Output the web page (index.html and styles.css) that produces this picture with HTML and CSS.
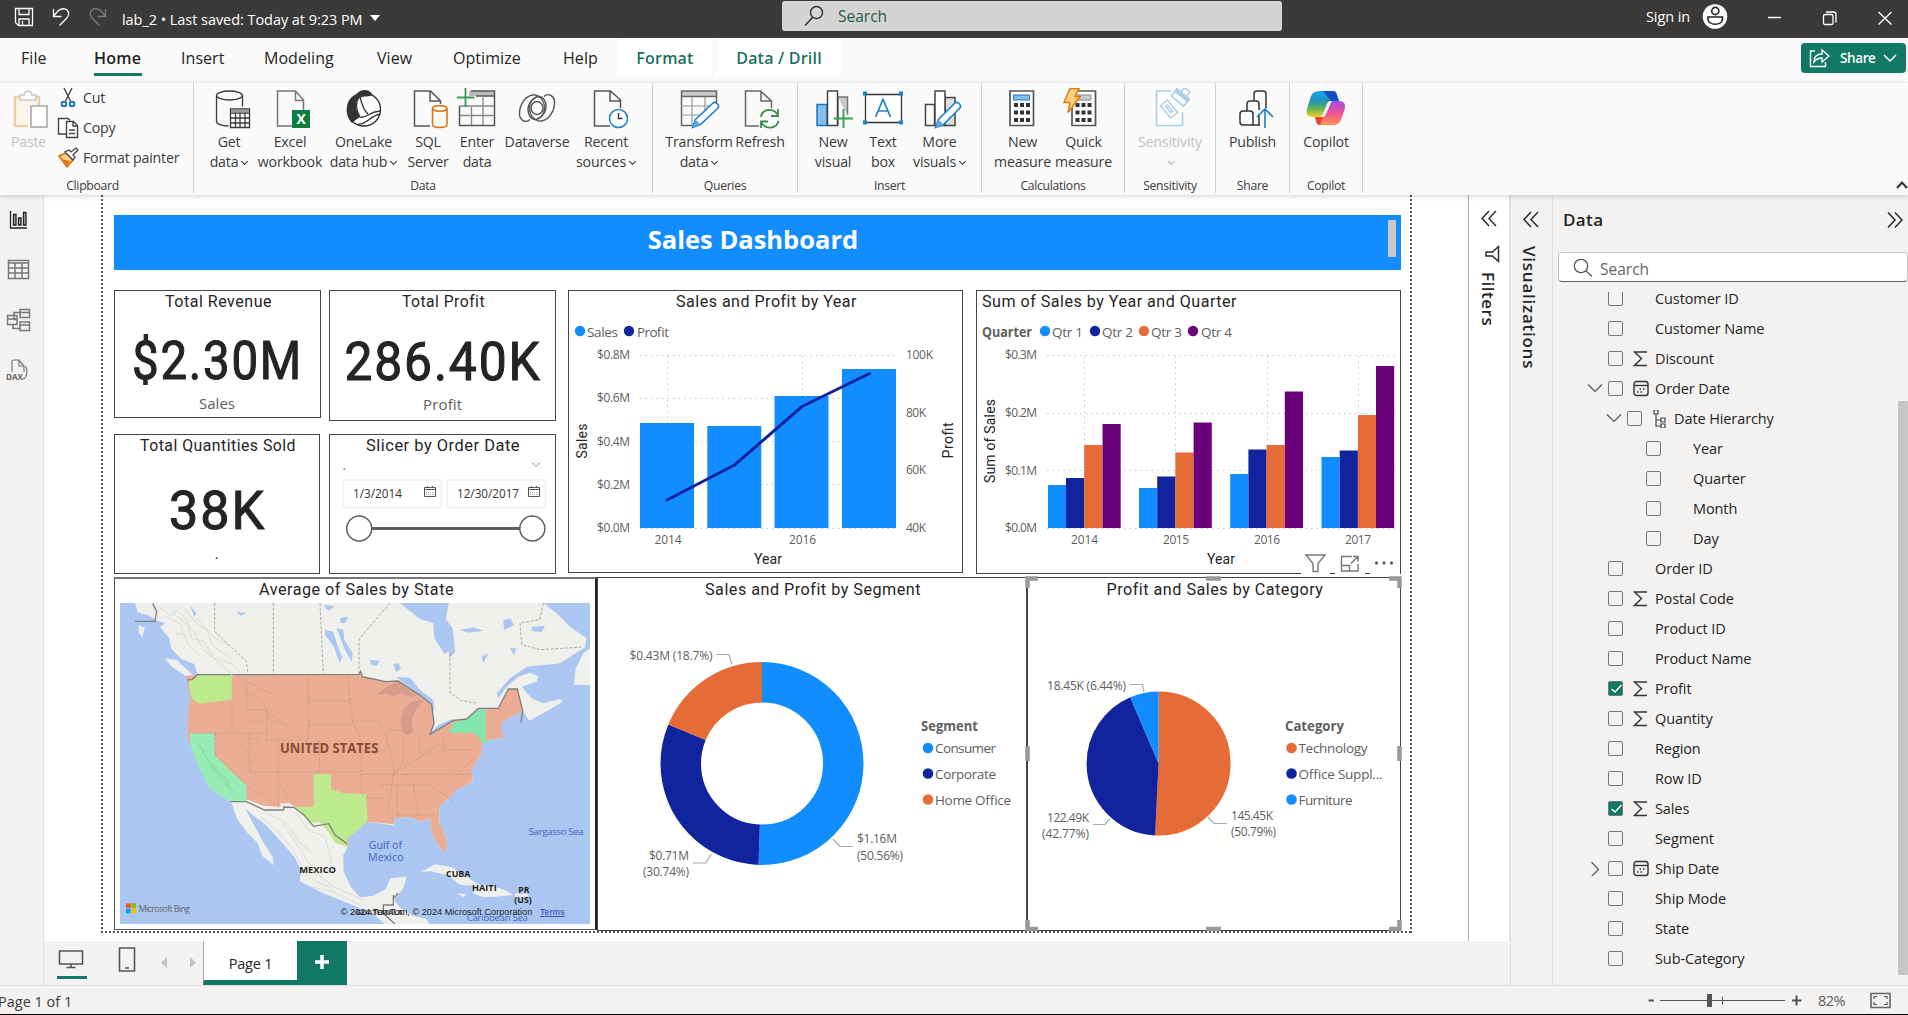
FILE: index.html
```html
<!DOCTYPE html>
<html lang="en">
<head>
<meta charset="utf-8">
<title>lab_2 - Power BI Desktop</title>
<link rel="stylesheet" href="styles.css">
</head>
<body>
<div class="app">
<header class="titlebar">
  <svg class="quick" viewBox="0 0 122 38"><g fill="none" stroke="#fff" stroke-width="1.3"><path d="M15.500 8.500h17v17h-14l-3-3zM19 8.500v6h10v-6M19 25v-6h10v6M22.500 25v-4"/><path d="M53.500 9v7.500h8M53.500 16l5-5.500c4-3 9-2 10 2 1 3-1 5-3 7l-6 6"/><path stroke="#7d7c7b" d="M105.500 9v7.500h-8M105.500 16l-5-5.500c-4-3-9-2-10 2-1 3 1 5 3 7l6 6"/></g></svg>
  <span class="doc">lab_2 • Last saved: Today at 9:23 PM</span><i class="down"></i>
  <div class="topsearch"><svg viewBox="0 0 20 22"><g fill="none" stroke="#333" stroke-width="1.500"><circle cx="12.500" cy="7.500" r="6"/><path d="M8.500 12.500L1 20.500"/></g></svg><span>Search</span></div>
  <span class="signin">Sign in</span>
  <svg class="winctl" viewBox="1700 0 208 38"><circle cx="1716" cy="16.500" r="12.300" fill="#fff"/><g fill="none" stroke="#222" stroke-width="1.600"><circle cx="1716.300" cy="11" r="3.600"/><path d="M1709 17h14.500v2c0 7-14.500 7-14.500 0z"/></g><g fill="none" stroke="#fff" stroke-width="1.300"><path d="M1769 17.500h13M1879.500 12l13 12.500M1892.500 12l-13 12.500"/><rect x="1824.500" y="14.500" width="9.500" height="10" rx="1.500"/><path d="M1827 12h7.500q2.500 0 2.500 2.500v8"/></g></svg>
</header>
<nav class="tabs">
  <span class="t1">File</span><span class="t2 active">Home</span><span class="t3">Insert</span><span class="t4">Modeling</span><span class="t5">View</span><span class="t6">Optimize</span><span class="t7">Help</span><span class="ctx t8">Format</span><span class="ctx t9">Data / Drill</span>
  <button class="share"><svg viewBox="1809 46 22 22"><path d="M1815 50h-4.500v15.500h15V61M1814 61c0-6 4-8 8-8v-4l7 6-7 6v-4c-4 0-6 1-8 4z" fill="none" stroke="#fff" stroke-width="1.400"/></svg><span>Share</span><svg class="shchev" viewBox="0 0 14 8"><path d="M1 1l6 6 6-6" fill="none" stroke="#fff" stroke-width="1.500"/></svg></button>
</nav>
<section class="ribbon">
  <div class="group clipboard"><div class="items">
    <div class="paste"><svg class="ic" viewBox="7 88 44 42"><g fill="#fff" stroke-width="2"><path d="M22 97h-7v29h13" fill="none" stroke="#ecd0a4" stroke-width="2.500"/><path d="M17 99h21v7H29v18H17z" fill="#fbf4e8"/><path d="M33 97h6v8" fill="none" stroke="#ecd0a4" stroke-width="2.500"/><path d="M20 100v-5h4c1-5 7-5 8 0h4v5z" stroke="#c8c8c8" stroke-width="1.500"/><path d="M31 106h16v21H31z" stroke="#b9b9b9"/></g></svg><span>Paste</span></div>
    <div class="clips">
      <div><svg viewBox="57 88 22 22"><g fill="none" stroke="#444" stroke-width="1.400"><path d="M64 89l7 14M72 89l-7 14"/><g stroke="#1b75bb" stroke-width="2"><circle cx="64" cy="105" r="2.300"/><circle cx="72" cy="105" r="2.300"/></g></g></svg><span class="c1">Cut</span></div>
      <div><svg viewBox="57 117 22 22"><g fill="#fff" stroke="#444" stroke-width="1.400"><path d="M66 134h-7.500v-15.500H68l2 2"/><path d="M66.500 121.500h7l4 4v12h-11zM73 122v4h4M69 130h6M69 133.500h6"/></g></svg><span class="c2">Copy</span></div>
      <div><svg viewBox="57 147 22 22"><path d="M59 156l7-3 7 7-6 7z" fill="#fbd08a" stroke="#d9700d" stroke-width="1.500"/><path d="M65 152l8 8 2-3-2-2 5-5-2-2-5 4-2-2z" fill="#fff" stroke="#444" stroke-width="1.300"/><path d="M61 159l9 2-3 5z" fill="#e07812"/></svg><span class="c3">Format painter</span></div>
    </div></div><h6>Clipboard</h6></div>

  <div class="group g-data"><div class="items">
    <div class="b w56"><svg class="ic" viewBox="206 88 44 42"><g fill="none" stroke="#3b3a39" stroke-width="1.300"><ellipse cx="228.500" cy="95.500" rx="13" ry="4.500"/><path d="M215.500 95.500v26c0 2.500 5 4.500 12 4.500M241.500 95.500v11"/><path fill="#fff" d="M229.500 109h19v18.500h-19z"/><path d="M229.500 113h19M229.500 118h19M229.500 123h19M234.500 113v14M239 113v14M244 113v14"/></g><path fill="#999" d="M230 109.500h18v3h-18z"/></svg><span>Get</span><span>data<i class="cv"></i></span></div>
    <div class="b w66"><svg class="ic" viewBox="267 88 44 42"><path d="M291 126h-14.500V91h18l8 9v10M294.500 91v9.500h8" fill="none" stroke="#777" stroke-width="1.500"/><path fill="#107c41" d="M291 110h18v18h-18z"/><text x="300" y="124" text-anchor="middle" class="xl">X</text></svg><span>Excel</span><span>workbook</span></div>
    <div class="b w82"><svg class="ic" viewBox="342 88 44 42"><circle cx="364" cy="109.500" r="16.500" fill="#fff" stroke="#333" stroke-width="1.400"/><path fill="#333" d="M356 95c3-6 13-7 16-1 1 3-7 2-10 3s-6 3-6 8 2 10 4 12c-3 2-6 4-8 6-4-4-6-10-5-16s4-11 9-12z"/><path d="M360 117c-4-7-5-14-1-20M360 117c6 2 8-5 20-6M358 124c8 1 12-8 22-10M360 97c2 8 4 14 8 17" fill="none" stroke="#333" stroke-width="1.300"/></svg><span>OneLake</span><span>data hub<i class="cv"></i></span></div>
    <div class="b w48"><svg class="ic" viewBox="406 88 44 42"><path d="M430 126h-15.500V91h16l10 10v3M430 91v10h10" fill="none" stroke="#555" stroke-width="1.500"/><path d="M432.500 108.500v16c0 4 14.500 4 14.500 0v-16" fill="#fffaf3" stroke="#d9700d" stroke-width="1.500"/><ellipse cx="439.750" cy="108.500" rx="7.250" ry="2.700" fill="#fff" stroke="#d9700d" stroke-width="1.500"/></svg><span>SQL</span><span>Server</span></div>
    <div class="b w50"><svg class="ic" viewBox="456 88 44 42"><path fill="#bbb" d="M470 91h25v5h-25z"/><g fill="none" stroke="#555" stroke-width="1.500"><path d="M472 91h23.500v34.500h-35V106M477 96h18"/><path stroke="#888" stroke-width="1.300" d="M461 106h34M461 115.500h34M472.500 107v18M484 96v29"/></g><path d="M466.500 88v19M458 97.500h17.500" stroke="#3a9955" stroke-width="1.800"/></svg><span>Enter</span><span>data</span></div>
    <div class="b w70"><svg class="ic" viewBox="516 88 44 42"><g fill="none" stroke="#555" stroke-width="1.400"><ellipse cx="538" cy="108" rx="6" ry="6.500"/><path d="M531 119.500c-4 4-10 1-10.500-5-.5-8 4.500-18 13-19.500 6-1 12 5 12 13 0 6-4 11-9 11.500-5 0-7.500-5-7.500-10 0-8 7-12 9-12.500"/><path d="M545 96.500c4-4 10-1 10.500 5 .5 8-4.500 18-13 19.500-6 1-12-5-12-13 0-6 4-11 9-11.500 5 0 7.500 5 7.500 10 0 8-7 12-9 12.500"/></g></svg><span>Dataverse</span></div>
    <div class="b w66r"><svg class="ic" viewBox="584 88 44 42"><path d="M610 126h-15.500V91h16l10 9v8M610 91v10h10" fill="none" stroke="#555" stroke-width="1.500"/><circle cx="618.500" cy="118.500" r="9" fill="#fff" stroke="#2482c5" stroke-width="1.500"/><path d="M618.500 113v5.500h4" fill="none" stroke="#333" stroke-width="1.400"/></svg><span>Recent</span><span>sources<i class="cv"></i></span></div>
  </div><h6>Data</h6></div>

  <div class="group g-q"><div class="items">
    <div class="b w68"><svg class="ic" viewBox="677 88 44 42"><path fill="#c8c8c8" d="M681 91h35v5h-35z"/><g fill="none" stroke="#666" stroke-width="1.500"><path d="M696 125.500h-14.500V91h35v12M681 96.500h35"/><path stroke="#999" stroke-width="1.200" d="M681 106h30M681 115h20M692 97v28M705 97v14"/></g><path d="M692.500 127.500l3-8 17-16c3-3 8 2 5 5l-17 16z" fill="#fff" stroke="#1b80c9" stroke-width="1.600"/><path fill="#60a9e0" d="M692.500 127.500l3-8 5 5z"/></svg><span>Transform</span><span>data<i class="cv"></i></span></div>
    <div class="b w52"><svg class="ic" viewBox="739 88 44 42"><path d="M760 126h-13.500V91h15l11 10v7M762 91v10h10" fill="none" stroke="#666" stroke-width="1.500"/><path d="M762 117c1-8 12-10 17-2M779 109v7h-7M779.500 121c-2 8-12 9-17 2M762 128v-6.500h7" fill="none" stroke="#3a8f4f" stroke-width="1.800"/></svg><span>Refresh</span></div>
  </div><h6>Queries</h6></div>

  <div class="group g-i"><div class="items">
    <div class="b w48"><svg class="ic" viewBox="811 88 44 42"><g stroke-width="1.500"><path d="M817 104.500h10v21h-10z" fill="#83beec" stroke="#1b75bb"/><path d="M838 97h9.500v18M838 97v28" fill="#c8c8c8" stroke="#777"/><path d="M827.500 91h10v34.500h-10z" fill="#fff" stroke="#444"/></g><path d="M843.500 109v19M834 118.500h19" stroke="#35a14d" stroke-width="1.900"/></svg><span>New</span><span>visual</span></div>
    <div class="b w52b"><svg class="ic" viewBox="861 88 44 42"><path d="M865.500 94.500h36v28h-36z" fill="#fff" stroke="#333" stroke-width="1.300"/><path d="M863 91.500h4v4h-4zM899 91.500h4v4h-4zM863 120.500h4v4h-4zM899 120.500h4v4h-4z" fill="#1b80c9"/><path d="M875.500 117l7.500-17.500 7.500 17.500M878 111h10" fill="none" stroke="#2482c5" stroke-width="1.700"/></svg><span>Text</span><span>box</span></div>
    <div class="b w60"><svg class="ic" viewBox="917 88 44 42"><g fill="#fff" stroke="#444" stroke-width="1.500"><path d="M924.500 104.500h9v21h-9z"/><path fill="#ddd" d="M944 97.500h10v28h-10z"/><path d="M934 91h10v34.500h-10z"/></g><path d="M934.500 127.500l3-8 16-16c3-3 8 2 5 5l-16 16z" fill="#fff" stroke="#1b80c9" stroke-width="1.600"/><path fill="#60a9e0" d="M934.500 127.500l3-8 5 5z"/></svg><span>More</span><span>visuals<i class="cv"></i></span></div>
  </div><h6>Insert</h6></div>

  <div class="group g-c"><div class="items">
    <div class="b w58"><svg class="ic" viewBox="1001 88 44 42"><path d="M1010 91h23.500v34.500H1010z" fill="#fff" stroke="#555" stroke-width="1.700"/><path d="M1013.500 95h16v5h-16z" fill="#83beec" stroke="#1b75bb"/><path d="M1014 105h16M1014 112.500h16M1014 120h16" stroke="#333" stroke-width="4" stroke-dasharray="4 2"/></svg><span>New</span><span>measure</span></div>
    <div class="b w58"><svg class="ic" viewBox="1061 88 44 42"><path d="M1071 91h23.500v34.500H1071z" fill="#fff" stroke="#555" stroke-width="1.700"/><path d="M1076 95h14v5h-14z" fill="#ccc" stroke="#888"/><path d="M1074.500 105h16M1074.500 112.500h16M1074.500 120h16" stroke="#333" stroke-width="4" stroke-dasharray="4 2"/><path d="M1069 88.500h9l-4 8h5l-12 16 2-10h-6z" fill="#ffd07a" stroke="#e07812" stroke-width="1.500"/></svg><span>Quick</span><span>measure</span></div>
  </div><h6>Calculations</h6></div>

  <div class="group g-s"><div class="items"><div class="b w80 off"><svg class="ic" viewBox="1148 88 44 42"><path d="M1171 91h-14.500v34.500h26V112" fill="#fff" stroke="#a9cfe9" stroke-width="1.600"/><g transform="translate(1180 98) rotate(40)" fill="#fff" stroke="#a9cfe9" stroke-width="1.600"><path d="M-3-11h7v6h-7zM-8-5H8v9H-8z"/><path fill="#a9cfe9" d="M-8-5H8v3H-8z"/></g><g transform="translate(1169 109) rotate(-40)" fill="#fff" stroke="#a9cfe9" stroke-width="1.500"><path d="M-4.500-8h9V8h-9zM-1-4v8h2.500v-8z"/></g></svg><span>Sensitivity</span><span><i class="cv"></i></span></div></div><h6>Sensitivity</h6></div>
  <div class="group g-p"><div class="items"><div class="b w66"><svg class="ic" viewBox="1231 88 44 42"><g fill="none" stroke="#333" stroke-width="1.500"><path d="M1266 108V94q0-3-3-3h-6q-3 0-3 3v7M1259 110v-6q0-3-3-3h-6q-3 0-3 3v7M1253 125v-11q0-3-3-3h-7q-3 0-3 3v8q0 3 3 3h17M1259 114v11"/></g><path d="M1265 128v-19M1257 117l8-8 8 8" fill="none" stroke="#1b80c9" stroke-width="1.600"/></svg><span>Publish</span></div></div><h6>Share</h6></div>
  <div class="group g-o"><div class="items"><div class="b w66"><svg class="ic" viewBox="1304 88 44 42"><defs><linearGradient id="ca" x1="0" y1="0" x2="0" y2="1"><stop offset="0" stop-color="#1aa5f0"/><stop offset=".4" stop-color="#2493b8"/><stop offset=".65" stop-color="#5bb45a"/><stop offset="1" stop-color="#f4cc1c"/></linearGradient><linearGradient id="cb" x1="0" y1="0" x2="0" y2="1"><stop offset="0" stop-color="#a34df0"/><stop offset=".5" stop-color="#ee4f91"/><stop offset="1" stop-color="#fd9852"/></linearGradient></defs><path d="M1320 91h13q3 0 4 4l2 6h-8q-3 0-4 3l-4 10q-1 3-5 3h-6q-7-1-5-8l4-13q2-5 9-5z" fill="url(#ca)"/><path d="M1323 91h10q3 0 4 4l2 6h-8z" fill="#174dc2"/><path d="M1333 101h7q6 1 5 7l-4 12q-2 5-8 5h-13q-3 0-4-4l-1-4h7q3 0 4-3l4-9q1-4 3-4z" fill="url(#cb)"/><path d="M1315 117h8l-3 8q-3 0-4-4z" fill="#e8472d"/></svg><span>Copilot</span></div></div><h6>Copilot</h6></div>
  <svg class="collapse" viewBox="0 0 12 8"><path d="M1 7l5-5.500L11 7" fill="none" stroke="#333" stroke-width="2"/></svg>
</section>

<main class="work">
  <aside class="rail"><svg viewBox="0 195 43 210"><g fill="none" stroke="#222" stroke-width="1.300"><path d="M10.500 211v17h16.500"/><path fill="#aaa" d="M13.500 214.500h2.500v10.500h-2.500zM18.500 218h2.500v7h-2.500zM23.500 212.500h2.500v12.500h-2.500z"/><g stroke="#777" stroke-width="1.500"><path d="M8.500 260.500h20v18h-20zM8.500 263h20M8.500 268h20M8.500 273h20M15 263v15M22 263v15"/><path d="M7.500 315.500h9.500v9h-9.500zM7.500 319h9.500M20 309.500h9.500v8H20zM20 312.500h9.500M20 322h9.500v8.500H20zM20 325h9.500M17 319.500h-3v-7h6M13 324.500v4h7"/><path stroke-width="1.200" d="M12 372v-10q0-2 2-2h5l5 6v6M19 360v6h5M25.500 366q2 3 1 8t-4 5"/></g></g><text x="6" y="379.500" textLength="17" lengthAdjust="spacingAndGlyphs" class="dax">DAX</text></svg></aside>
  <div class="center">
   <div class="canvaswrap">
    <div class="canvas">
     <div class="page">
      <div class="banner"><h1>Sales Dashboard</h1><i class="thumb"></i></div>
      <div class="row upper">
       <div class="cards">
        <svg class="vis" style="width:207px;height:128px" viewBox="114 290 207 128"><text class="din" x="165" y="307" textLength="107" lengthAdjust="spacingAndGlyphs">Total Revenue</text><text class="num" x="132" y="379" textLength="171" lengthAdjust="spacingAndGlyphs">$2.30M</text><text class="lab l16" x="199" y="409" textLength="36">Sales</text></svg>
        <svg class="vis" style="width:227px;height:131px" viewBox="329 290 227 131"><text class="din" x="402" y="307" textLength="83" lengthAdjust="spacingAndGlyphs">Total Profit</text><text class="num" x="344.500" y="380" textLength="197" lengthAdjust="spacingAndGlyphs">286.40K</text><text class="lab l16" x="423" y="410" textLength="39">Profit</text></svg>
        <svg class="vis" style="width:206px;height:140px" viewBox="114 434 206 140"><text class="din" x="140" y="451" textLength="156" lengthAdjust="spacingAndGlyphs">Total Quantities Sold</text><text class="num" x="169" y="529" textLength="97" lengthAdjust="spacingAndGlyphs">38K</text><text class="din" x="214.500" y="559">.</text></svg>
        <svg class="vis" style="width:227px;height:140px" viewBox="329 434 227 140"><text class="din" x="366" y="451" textLength="154" lengthAdjust="spacingAndGlyphs">Slicer by Order Date</text><text class="lab" x="342.500" y="470">.</text><path d="M532 462.500l4 4 4-4" fill="none" stroke="#888"/><g fill="none" stroke="#f0f0f0" stroke-width="1.500"><path d="M343.500 480h98v27.500h-98zM447.500 480h98v27.500h-98z"/></g><text class="date" x="353" y="498" textLength="49" lengthAdjust="spacingAndGlyphs">1/3/2014</text><text class="date" x="457" y="498" textLength="62" lengthAdjust="spacingAndGlyphs">12/30/2017</text><g fill="none" stroke="#555"><path d="M424.500 487.500h11v9h-11zM424.500 489.500h11M427.500 486v2M432.500 486v2M528.500 487.500h11v9h-11zM528.500 489.500h11M531.500 486v2M536.500 486v2"/><path stroke="#aaa" stroke-dasharray="1 1" d="M426 492.500h8M426 494.500h8M530 492.500h8M530 494.500h8"/></g><path d="M371 528.500h149" stroke="#605e5c" stroke-width="3"/><g fill="#fff" stroke="#605e5c" stroke-width="1.500"><circle cx="359.200" cy="528.500" r="12.500"/><circle cx="532.300" cy="528.500" r="12.500"/></g></svg>
       </div>
       <svg class="vis" style="width:395px;height:283px" viewBox="568 290 395 283"><text class="din" x="676" y="307" textLength="181" lengthAdjust="spacingAndGlyphs">Sales and Profit by Year</text><circle cx="580" cy="331" r="5.200" fill="#118dff"/><circle cx="629" cy="331" r="5.200" fill="#12239e"/><g class="lab l14"><text x="587" y="337" textLength="31">Sales</text><text x="637" y="337" textLength="32">Profit</text></g>
        <g class="grid"><path d="M640 355.500h256M640 398.500h256M640 441.500h256M640 484.500h256M640 528.500h256M667.500 356v170M802.500 356v170"/></g>
        <g fill="#118dff"><path d="M640 423h54v105h-54zM707.300 426h54v102h-54zM774.500 396h54v132h-54zM842 369h54v159h-54z"/></g><path d="M667 500l67.500-35L802 406.500l67.500-33" fill="none" stroke="#12239e" stroke-width="3" stroke-linecap="round" stroke-linejoin="round"/>
        <g class="lab l13"><text x="597" y="359" textLength="33">$0.8M</text><text x="597" y="402.300" textLength="33">$0.6M</text><text x="597" y="445.600" textLength="33">$0.4M</text><text x="597" y="489" textLength="33">$0.2M</text><text x="597" y="532" textLength="33">$0.0M</text><text x="906" y="359" textLength="27">100K</text><text x="906" y="417" textLength="20">80K</text><text x="906" y="474" textLength="20">60K</text><text x="906" y="532" textLength="20">40K</text><text x="654.500" y="544" textLength="27">2014</text><text x="789" y="544" textLength="27">2016</text></g>
        <g class="din d14"><text x="754" y="564" textLength="28">Year</text><text transform="translate(587 458.500) rotate(-90)" textLength="35">Sales</text><text transform="translate(953 458.500) rotate(-90)" textLength="36">Profit</text></g></svg>
       <div class="visbox"><svg class="vis" style="width:425px;height:284px" viewBox="976 290 425 284"><text class="din" x="982" y="307" textLength="255" lengthAdjust="spacingAndGlyphs">Sum of Sales by Year and Quarter</text><text class="lab l14 bold" x="982" y="337" textLength="50" lengthAdjust="spacingAndGlyphs">Quarter</text><circle cx="1045" cy="331" r="5.200" fill="#118dff"/><circle cx="1095" cy="331" r="5.200" fill="#12239e"/><circle cx="1144" cy="331" r="5.200" fill="#e66c37"/><circle cx="1193" cy="331" r="5.200" fill="#6b007b"/><g class="lab l14"><text x="1052" y="337" textLength="31">Qtr 1</text><text x="1102" y="337" textLength="31">Qtr 2</text><text x="1151" y="337" textLength="31">Qtr 3</text><text x="1201" y="337" textLength="31">Qtr 4</text></g>
        <g class="grid"><path d="M1047 355.500h348M1047 413.500h348M1047 470.500h348M1047 528.500h348M1084.500 356v170M1175.500 356v170M1267.500 356v170M1358.500 356v170"/></g>
        <path fill="#118dff" d="M1048 485h18.200v43H1048zM1139 488h18.200v40H1139zM1230.200 474h18.200v54h-18.200zM1321.500 457h18.200v71h-18.200z"/><path fill="#12239e" d="M1066 478h18.200v50H1066zM1157.200 476.500h18.200v51.500h-18.200zM1248.400 449.500h18.200v78.500h-18.200zM1339.700 450.500h18.200v77.500h-18.200z"/><path fill="#e66c37" d="M1084.200 445h18.200v83h-18.200zM1175.400 452.500h18.200v75.500h-18.200zM1266.600 445h18.200v83h-18.200zM1357.900 415h18.200v113h-18.200z"/><path fill="#6b007b" d="M1102.500 424h18.200v104h-18.200zM1193.600 422.500h18.200v105.500h-18.200zM1284.800 391.500h18.200v136.500h-18.200zM1376 366h18.200v162H1376z"/>
        <g class="lab l13"><text x="1005" y="359" textLength="32">$0.3M</text><text x="1005" y="417" textLength="32">$0.2M</text><text x="1005" y="474.600" textLength="32">$0.1M</text><text x="1005" y="532" textLength="32">$0.0M</text><text x="1071" y="544" textLength="27">2014</text><text x="1163" y="544" textLength="26">2015</text><text x="1254" y="544" textLength="26">2016</text><text x="1345" y="544" textLength="26">2017</text></g><g class="din d14"><text x="1207" y="564" textLength="28">Year</text><text transform="translate(995 483) rotate(-90)" textLength="84">Sum of Sales</text></g></svg>
        <svg class="hdr" viewBox="1301 550 101 26"><path fill="#fff" d="M1301 571h29v5h-29zM1335 571h30v5h-30zM1370 571h30v5h-30z"/><g fill="none" stroke="#777" stroke-width="1.400"><path d="M1306 555h19l-7 8.500v8h-5v-8z"/><path d="M1352 556.500h-10.500v14.500h16.500v-7M1341.500 565.500h8v5.500M1353 556.500h5v5M1358 556.500l-7 7"/></g><g fill="#666"><circle cx="1376.500" cy="563" r="1.700"/><circle cx="1384" cy="563" r="1.700"/><circle cx="1391.500" cy="563" r="1.700"/></g></svg></div>
      </div>
      <div class="row lower">
       <div class="mapvis"><svg class="maptitle" viewBox="120 579 470 24"><text class="din" x="259" y="595" textLength="195" lengthAdjust="spacingAndGlyphs">Average of Sales by State</text></svg>
       <svg class="map" viewBox="30 99 1410 963" preserveAspectRatio="none">
        <rect x="30" y="99" width="1410" height="963" fill="#abc6f1"/>
        <g fill="#efefeb"><path d="M75 99L83 127L118 137L143 152L165 160L150 172L178 205L183 235L213 267L253 282L263 315L233 330L244 385L238 488L240 520L262 580L300 655L362 693L382 748L412 788L442 818L457 858L492 886L487 858L459 816L437 774L405 714L427 734L467 764L512 814L554 862L574 904L569 934L640 970L720 1002L790 1032L830 1067H960L950 1048L905 1036L868 1010L852 990L880 955L890 920L842 924L826 958L790 977L750 982L722 950L701 905L700 855L714 830L712 805L770 755L850 766L856 745L900 742L935 755L960 745L965 790L1000 848L1010 835L1008 800L988 760V710L1040 660L1088 635L1085 600L1116 545V515L1185 500L1172 480L1178 455L1238 422L1258 452L1300 430L1358 395L1350 387L1300 400L1265 385L1235 350L1280 335L1284 318L1260 308L1225 320L1190 350L1165 385L1160 370L1200 325L1250 290L1350 280L1425 232L1430 205L1380 170L1340 130L1300 99Z"/><path d="M1392 345l5-50 23-45 20-15v110zM165 265l35 5 55 50-10 10-60-40zM85 165l20 8-8 30-10-15zM935 905l40-22 50 8 60 40 30 18-65-5-40-30-50-10zM1090 945l50 0 45 15 25 15-50 5-40 2-30-12zM1040 970l30 3-10 8zM1215 970l40 2-5 10h-35z"/></g>
        <g fill="#abc6f1"><path d="M870 99l60 48 40 12 3 45 30 48 14-10v24l18-20-6-70-22-28 10-49zM645 180l25 5 12 40 15 38-8 16-18-50-25-34zM680 175l20 5 3 30 25 40-3 25-20-35zM850 283l15-4 8 18-15 8zM780 270l30 2-10 15-18-3zM690 145l25-5-8 18-14 2zM640 105l35 3-20 15zM1050 180l40-8 30 10-45 6zM1180 150l20-5 12 20-30 15zM1265 170l40-3-10 20-30-4zM1200 235l20 0-8 20zM1115 260l20-10-15 30zM380 125l30 4-18 8zM240 105l20 28-8 6zM860 320l40 3 30 37 40 30 4 34-38-46-60-43zM965 485l20-20 42-18-5 22-50 24z"/></g>
        <path d="M262 315l485-2 5-9 5 16 70 15 38-2 65 43 35 27 7 57-12 33 70-42 40-4 35-32h60l30-58h27l16 65-60 33-6 25 13 20-69 15v30l-31 55 3 35-48 25-52 50v50l20 40 2 35-10 13-35-58-5-45-25 10-35-13-44 3-6 18-80-8-56 48v25l-35-10-30-45-20-20-25 5-35-38-30-20h-28v10l-50-3-60-22-45-5-62-38-35-70-25-65-2-40 8-90-13-60z" fill="#eaad94"/>
        <path d="M235 330l32-15h98v74l-97 12-23-16z" fill="#bdea8c"/><path d="M240 490h74v66l95 90 2 50-49-1-62-38-35-70-25-65z" fill="#97ecb5"/><path d="M611 613h52v45l40 12 65 3 5 75-5 12-56 45v25l-35-10-30-45-20-20-27 5-30-38-22-12h63z" fill="#bdea8c"/><path d="M1017 488l12-30 41-10 35-32h22v98l30-7-40 15-5-15-22-19z" fill="#84e5ac"/>
        <g fill="none" stroke="#9b7163" stroke-width="2" stroke-dasharray="8 5" opacity=".5"><path d="M366 400v90M245 490h225M470 415v95h125M410 340v80h60M315 490v65l95 90M419 490v115M595 318v192M595 393h130M595 465h130M419 605h335M505 512v205M628 510v93M713 318l15 135 25 60v160l15 12M725 453h80l20 30 30 130M755 613h330M835 480h45M880 495v80l-30 40-20 130M928 495v70M1000 500v40h90M770 685h50M815 645h145l70 50M862 645v95M910 645l12 80M862 735h115M850 612l80-50 60-40M755 543h80"/></g>
        <g fill="none" stroke="#aaa" stroke-width="3" stroke-dasharray="9 5"><path d="M314 99v85l95 90 5 38M490 99v213M630 99l10 213M840 99l-93 108v105M1020 250v118l35 24 50 8M1300 99l-10 50-60 10 5 65 55 15 130-8"/></g>
        <g fill="#a46b7a" opacity=".28"><path d="M797 376l32-25 38-15 53 40-18 5-30-12-22 10-20-8zM880 490l-8-35 8-38 23-22 38-6-22 28-14 32 4 35-14 12z"/></g>
        <g fill="none" stroke="#808080" stroke-width="4"><path d="M75 154h60l5-30-12-24M232 330l15-2 15-14 485-1 5-9 5 16 70 15 38-2 65 43 35 27 7 57-12 33 70-42 40-4 35-32h60l30-58h27l16 65-5 35M362 695h47l55 25h57v-9l30 1 30 22 30 35 45-8 20 35 35 25"/><path d="M850 975v30h-30v25l35 32M865 970l-15 15"/></g>
        <g fill="none" stroke="#dcdcd7" stroke-width="3"><path d="M150 115l30 20 20-15 30 30 15 55 35 8 30 50 60 20 20 25M195 190l30 5 10 30 30 30M260 145l50 55 60 35M190 130l60 50 30 60 50 40 40 40M170 140l40 20 15 40M220 110l40 50 30 20 20 50 60 40M450 740l50 40 50 60 40 80 75 35M560 730l35 50 50 20 20 80M520 760l90 140 60 50 90 40M470 730l60 30 40 60 40 30M600 950l70 15 80 40"/></g>
        <g fill="none" stroke="#cc967e" stroke-width="3" opacity=".45"><path d="M370 325l40 40 50 30 20 55 60 20M400 330l100 50M400 440l50 20 30-30 40 30M390 520l40 60M430 500l20 25M510 640l30 50M410 650l60 30M1100 560l-90 80"/></g>
        <path d="M265 520l35 60 60 60M300 590l70 75" fill="none" stroke="#80d49f" stroke-width="4" opacity=".7"/>
        <g class="mt"><text x="510" y="549" textLength="295" lengthAdjust="spacingAndGlyphs" fill="#8b4a36" font-size="42">UNITED STATES</text><g fill="#222" font-size="27"><text x="568" y="908" textLength="110" lengthAdjust="spacingAndGlyphs">MEXICO</text><text x="1008" y="920" textLength="73" lengthAdjust="spacingAndGlyphs">CUBA</text><text x="1086" y="962" textLength="74" lengthAdjust="spacingAndGlyphs">HAITI</text><text x="1225" y="969" textLength="33" lengthAdjust="spacingAndGlyphs">PR</text><text x="1213" y="998" textLength="52" lengthAdjust="spacingAndGlyphs">(US)</text></g></g>
        <g class="sea"><text x="776" y="837" textLength="100" font-size="32">Gulf of</text><text x="774" y="873" textLength="107" font-size="32">Mexico</text><text x="1256" y="795" textLength="165" font-size="29">Sargasso Sea</text><text x="1070" y="1053" textLength="184" font-size="28">Caribbean Sea</text></g>
        <path d="M48 1000h14v14H48z" fill="#f35325"/><path d="M64 1000h14v14H64z" fill="#81bc06"/><path d="M48 1016h14v14H48z" fill="#05a6f0"/><path d="M64 1016h14v14H64z" fill="#ffba08"/>
        <text class="bing" x="86" y="1026" textLength="154">Microsoft Bing</text>
        <g class="mt" fill="#555" font-size="22"><text x="738" y="1034" textLength="140" lengthAdjust="spacingAndGlyphs">GUATEMALA</text><text x="838" y="1076" textLength="152" lengthAdjust="spacingAndGlyphs">NICARAGUA</text></g>
        <g class="copy"><text x="692" y="1035" textLength="575" lengthAdjust="spacingAndGlyphs">© 2024 TomTom, © 2024 Microsoft Corporation</text><text class="terms" x="1290" y="1035" textLength="74">Terms</text></g>
       </svg></div>
       <svg class="vis seg" style="width:430px;height:354px" viewBox="597 577 430 354"><text class="din" x="705" y="595" textLength="216" lengthAdjust="spacingAndGlyphs">Sales and Profit by Segment</text>
        <g fill="none" stroke-width="40.500" transform="rotate(-90 762 763.500)"><circle cx="762" cy="763.500" r="81.250" pathLength="100" stroke="#118dff" stroke-dasharray="50.560 49.440"/><circle cx="762" cy="763.500" r="81.250" pathLength="100" stroke="#12239e" stroke-dasharray="30.740 69.260" stroke-dashoffset="-50.560"/><circle cx="762" cy="763.500" r="81.250" pathLength="100" stroke="#e66c37" stroke-dasharray="18.700 81.300" stroke-dashoffset="-81.300"/></g>
        <g class="lead"><path d="M716 654.500h13l3 10M833 839l7 7.500h13M693 863h13l5-9"/></g><g class="lab l13"><text x="629.500" y="660" textLength="83">$0.43M (18.7%)</text><text x="857" y="843" textLength="40">$1.16M</text><text x="857" y="860" textLength="46">(50.56%)</text><text x="649" y="860" textLength="40">$0.71M</text><text x="643" y="876" textLength="46">(30.74%)</text></g>
        <text class="lab l14 bold" x="921" y="731" textLength="57" lengthAdjust="spacingAndGlyphs">Segment</text><circle cx="928" cy="748" r="5.300" fill="#118dff"/><circle cx="928" cy="773.500" r="5.300" fill="#12239e"/><circle cx="928" cy="799.500" r="5.300" fill="#e66c37"/><g class="lab l14"><text x="935" y="753" textLength="61">Consumer</text><text x="935" y="779" textLength="61">Corporate</text><text x="935" y="805" textLength="76">Home Office</text></g></svg>
       <div class="visbox"><svg class="vis cat" style="width:374px;height:354px" viewBox="1027 577 374 354"><text class="din" x="1106.500" y="595" textLength="217" lengthAdjust="spacingAndGlyphs">Profit and Sales by Category</text>
        <g fill="none" stroke-width="72" transform="rotate(-90 1158.600 763.500)"><circle cx="1158.600" cy="763.500" r="36" pathLength="100" stroke="#e66c37" stroke-dasharray="50.790 49.210"/><circle cx="1158.600" cy="763.500" r="36" pathLength="100" stroke="#12239e" stroke-dasharray="42.770 57.230" stroke-dashoffset="-50.790"/><circle cx="1158.600" cy="763.500" r="36" pathLength="100" stroke="#118dff" stroke-dasharray="6.440 93.560" stroke-dashoffset="-93.560"/></g>
        <g class="lead"><path d="M1130 684.500h12.500l1.500 8M1208 817l6 6.500h13M1093 824.500h12l5-6"/></g><g class="lab l13"><text x="1047" y="690" textLength="79">18.45K (6.44%)</text><text x="1047" y="822" textLength="42">122.49K</text><text x="1042" y="838" textLength="47">(42.77%)</text><text x="1231" y="820" textLength="42">145.45K</text><text x="1231" y="836" textLength="45">(50.79%)</text></g>
        <text class="lab l14 bold" x="1285" y="731" textLength="59" lengthAdjust="spacingAndGlyphs">Category</text><circle cx="1291.500" cy="748" r="5.300" fill="#e66c37"/><circle cx="1291.500" cy="773.500" r="5.300" fill="#12239e"/><circle cx="1291.500" cy="799.500" r="5.300" fill="#118dff"/><g class="lab l14"><text x="1298.500" y="753" textLength="69">Technology</text><text x="1298.500" y="779" textLength="84">Office Suppl...</text><text x="1298.500" y="805" textLength="54">Furniture</text></g></svg>
        <svg class="handles" viewBox="1025 575 378 358"><g fill="none" stroke="#999" stroke-width="4.500"><path d="M1027.500 588v-9.500h10.500M1389 578.500h10.500V588M1027.500 920v9h10.500M1389 929h10.500v-9M1206 578.500h15M1206 929h15M1027.500 746v15M1399.500 746v15"/></g></svg></div>
      </div>
     </div>
    </div>
    <aside class="filters"><svg viewBox="1469 195 40 75"><path d="M1489 211l-7 7.500 7 7.500M1496 211l-7 7.500 7 7.500M1498.500 246.500v15l-6-5.500h-6.500v-4h6.500z" fill="none" stroke="#252423" stroke-width="1.400"/></svg><span class="vtext vf">Filters</span></aside>
   </div>
   <div class="pages"><svg viewBox="44 941 159 44"><g fill="none" stroke="#555" stroke-width="1.600"><path d="M59.500 951h23v13h-23zM71 964v3M66.500 967.500h9M119.500 948h15v23h-15zM125 968h4"/></g><path fill="#117865" d="M57 976h30v3H57z"/><path fill="#c3c3c3" d="M167 957v11l-6-5.500zM190 957v11l6-5.500z"/></svg><div class="pagetab">Page 1</div><div class="add"><svg viewBox="0 0 14 14"><path d="M7 0v14M0 7h14" stroke="#fff" stroke-width="3.500"/></svg></div></div>
  </div>
  <aside class="viz"><svg viewBox="1511 195 41 45"><path d="M1531 212l-7 7.500 7 7.500M1538 212l-7 7.500 7 7.500" fill="none" stroke="#252423" stroke-width="1.400"/></svg><span class="vtext vv">Visualizations</span></aside>
  <aside class="data">
   <div class="dhead"><h3>Data</h3><svg viewBox="0 0 17 16"><path d="M1 .5L8 8l-7 7.500M8 .5L15 8l-7 7.500" fill="none" stroke="#252423" stroke-width="1.400"/></svg></div>
   <div class="dsearch"><svg viewBox="0 0 20 20"><g fill="none" stroke="#555" stroke-width="1.300"><circle cx="8" cy="8" r="6.700"/><path d="M13 13l6 5.500"/></g></svg><span>Search</span></div>
   <div class="fields"><ul>
    <li><i class="x"></i><i class="cb"></i><i class="fi"></i><span>Customer ID</span></li>
    <li><i class="x"></i><i class="cb"></i><i class="fi"></i><span>Customer Name</span></li>
    <li><i class="x"></i><i class="cb"></i><svg class="fi"><use href="#sigma"/></svg><span>Discount</span></li>
    <li><svg class="x"><use href="#open"/></svg><i class="cb"></i><svg class="fi"><use href="#cal"/></svg><span>Order Date</span></li>
    <li class="l2"><svg class="x"><use href="#open"/></svg><i class="cb"></i><svg class="fi"><use href="#hier"/></svg><span>Date Hierarchy</span></li>
    <li class="l3"><i class="x"></i><i class="cb"></i><i class="fi"></i><span>Year</span></li>
    <li class="l3"><i class="x"></i><i class="cb"></i><i class="fi"></i><span>Quarter</span></li>
    <li class="l3"><i class="x"></i><i class="cb"></i><i class="fi"></i><span>Month</span></li>
    <li class="l3"><i class="x"></i><i class="cb"></i><i class="fi"></i><span>Day</span></li>
    <li><i class="x"></i><i class="cb"></i><i class="fi"></i><span>Order ID</span></li>
    <li><i class="x"></i><i class="cb"></i><svg class="fi"><use href="#sigma"/></svg><span>Postal Code</span></li>
    <li><i class="x"></i><i class="cb"></i><i class="fi"></i><span>Product ID</span></li>
    <li><i class="x"></i><i class="cb"></i><i class="fi"></i><span>Product Name</span></li>
    <li><i class="x"></i><svg class="cb on"><use href="#tick"/></svg><svg class="fi"><use href="#sigma"/></svg><span>Profit</span></li>
    <li><i class="x"></i><i class="cb"></i><svg class="fi"><use href="#sigma"/></svg><span>Quantity</span></li>
    <li><i class="x"></i><i class="cb"></i><i class="fi"></i><span>Region</span></li>
    <li><i class="x"></i><i class="cb"></i><i class="fi"></i><span>Row ID</span></li>
    <li><i class="x"></i><svg class="cb on"><use href="#tick"/></svg><svg class="fi"><use href="#sigma"/></svg><span>Sales</span></li>
    <li><i class="x"></i><i class="cb"></i><i class="fi"></i><span>Segment</span></li>
    <li><svg class="x"><use href="#shut"/></svg><i class="cb"></i><svg class="fi"><use href="#cal"/></svg><span>Ship Date</span></li>
    <li><i class="x"></i><i class="cb"></i><i class="fi"></i><span>Ship Mode</span></li>
    <li><i class="x"></i><i class="cb"></i><i class="fi"></i><span>State</span></li>
    <li><i class="x"></i><i class="cb"></i><i class="fi"></i><span>Sub-Category</span></li>
   </ul><i class="scroll"></i></div>
  </aside>
</main>
<footer class="status"><span class="pcount">Page 1 of 1</span><svg viewBox="1640 986 170 28"><g stroke="#555" fill="none"><path stroke-width="2" d="M1648.500 1000.500h5.500M1792 1000.500h9.500M1796.500 995.500v10"/><path d="M1660 1000.500h125M1722.500 996.500v8"/></g><path fill="#555" d="M1707 994h5v13h-5z"/></svg><span class="pct">82%</span><svg class="fit" viewBox="0 0 22 18"><path d="M1 1.500h19v14H1z" fill="none" stroke="#666" stroke-width="1.600"/><path d="M7 4.500H4V7M14 4.500h3V7M4 10v2.500h3M17 10v2.500h-3" fill="none" stroke="#555" stroke-width="1.200"/></svg></footer>
</div>
<svg class="defs"><defs>
 <g id="sigma" fill="none" stroke="#333" stroke-width="1.400"><path d="M14 2H1.500l7 6.500-7 7H14"/></g>
 <g id="cal" fill="none" stroke="#333" stroke-width="1.400"><rect x="1" y="1.500" width="14" height="14" rx="2.500"/><path d="M1 5.500h14"/><path stroke-dasharray="1.500 2" d="M6.500 9h6M4 12h6"/></g>
 <g id="hier" fill="none" stroke="#444" stroke-width="1.200"><path d="M2 0h4v4H2zM9 8h4v4H9zM9 14h4v4H9zM4 4v12h5M4 10h5"/></g>
 <g id="open"><path d="M1 2.500l7 7 7-7" fill="none" stroke="#555" stroke-width="1.200"/></g>
 <g id="shut"><path d="M4.500 0l7 7.500-7 7" fill="none" stroke="#555" stroke-width="1.200"/></g>
 <g id="tick"><path d="M2.500 7l3.500 3 6.500-7" fill="none" stroke="#fff" stroke-width="1.500"/></g>
</defs></svg>
</body>
</html>
```
FILE: styles.css
```css
*{box-sizing:border-box}
body{margin:0;background:#f3f2f1;font-family:"Open Sans","Noto Sans",sans-serif;color:#252423;overflow:hidden}
h1,h2,h3,h6,ul{margin:0;padding:0;font-weight:400;list-style:none}
svg{display:block;flex:none}
.defs{position:absolute;width:0;height:0}
.app{width:1908px;height:1015px;display:flex;flex-direction:column;border-bottom:1px solid #000}
.titlebar{height:38px;flex:none;background:#3b3a39;color:#fff;display:flex;font-size:15px;line-height:37px}
.quick{width:122px;height:38px}
.doc{width:240px;white-space:nowrap;letter-spacing:-.05px;font-size:14.500px;line-height:39px}
.down{width:0;height:0;border:5.500px solid transparent;border-top:6px solid #fff;border-bottom:0;margin:15px 0 0 8px}
.topsearch{margin:1px 0 0 402px;width:500px;height:30px;background:#d4d4d2;border-radius:3px;display:flex;padding-left:22px;line-height:31px;font-size:15.500px;color:#1e5c4c}
.topsearch svg{width:20px;height:22px;margin:4px 14px 0 0}
.signin{margin-left:364px;width:53px;line-height:33px;font-size:14.500px;letter-spacing:-.1px;white-space:nowrap}
.winctl{width:208px;height:38px}
.tabs{height:45px;flex:none;background:#fafafa;display:flex;font-size:16px;line-height:40px;white-space:nowrap}
.tabs span{height:38px}
.t1{margin-left:21px;width:73px}.t2{width:48px;margin-right:39px}.t3{width:83px}.t4{width:113px}.t5{width:76px}.t6{width:110px}.t7{width:55px}
.tabs>span{letter-spacing:.05px}
.tabs .active{font-weight:600;border-bottom:3px solid #117865;letter-spacing:.2px}
.tabs .ctx{background:#fff;color:#19705f;font-weight:600;text-align:center;letter-spacing:.2px}
.t8{width:94px;margin-right:5px}.t9{width:124px}
.share{margin:5px 0 0 960px;width:105px;height:30px;border:0;border-radius:4px;background:#117865;color:#fff;font:600 13.500px "Open Sans";display:flex;align-items:center;padding:0 0 0 8px;letter-spacing:-.4px}
.share>svg:first-child{width:22px;height:22px;margin-right:9px}
.share>span{width:43px;height:30px;line-height:30px;text-align:left}.shchev{width:14px;height:8px}
.ribbon{height:112px;flex:none;background:#fafafa;display:flex;box-shadow:0 1px 5px rgba(0,0,0,.2);z-index:2;position:relative;color:#3b3a39;font-size:14.200px;letter-spacing:-.2px}
.group{height:110px;border-right:1px solid #d2d0ce;display:flex;flex-direction:column;flex:none}
.items{display:flex;height:95px;flex:none;justify-content:center}
.group h6{font-size:12.200px;line-height:16px;text-align:center;letter-spacing:-.3px}
.clipboard{width:194px}.g-data{width:459px}.g-q{width:145px}.g-i{width:184px}.g-c{width:143px}.g-s{width:91px}.g-p{width:74px}.g-o{width:73px}
.clipboard .items{justify-content:flex-start}.clipboard h6{padding-right:8px}
.g-data .items{justify-content:flex-start;padding-left:7px}
.g-q .items{padding-left:2px}
.b,.paste{display:flex;flex-direction:column;align-items:center;flex:none;padding-top:5px;line-height:20px;white-space:nowrap}
.ic{width:44px;height:42px;margin-bottom:2px}
.w56{width:56px}.w66{width:66px}.w82{width:81px}.w48{width:48px}.w50{width:50px}.w70{width:70px}.w66r{width:68px}.w68{width:68px}.w52{width:54px}.w52b{width:52px}.w60{width:61px}.w58{width:61px}.w80{width:80px}
.off{color:#c2c0be}
.cv{display:inline-block;width:5px;height:5px;border:solid #333;border-width:0 1.500px 1.500px 0;transform:rotate(45deg);margin:0 1px 3px 4px}
.off .cv{border-color:#aaa}
.paste{color:#c2c0be;width:53px;margin-left:2px}
.clips{display:flex;flex-direction:column;line-height:30px}
.clips div{display:flex;height:30px;align-items:center;white-space:nowrap}
.clips svg{width:22px;height:22px;margin:0 4px 0 2px}
.collapse{width:12px;height:8px;margin:98px 0 0 533px}
.work{height:790px;flex:none;display:flex}
.rail{width:44px;border-right:1px solid #e1dfdd}.rail svg{width:43px;height:210px}
.dax{font:700 9px "Open Sans";fill:#666}
.center{width:1466px;display:flex;flex-direction:column}
.canvaswrap{height:746px;display:flex;background:#fff}
.canvas{width:1424px;padding-left:57px}
.page{width:1311px;height:738px;padding:20px 0 0 13px;background:repeating-linear-gradient(180deg,#555 0 2px,transparent 2px 4px) 0 0/2px 100% no-repeat,repeating-linear-gradient(180deg,#555 0 2px,transparent 2px 4px) 100% 0/2px 100% no-repeat,repeating-linear-gradient(90deg,#555 0 2px,transparent 2px 4px) 0 100%/100% 2px no-repeat}
.banner{width:1287px;height:55px;background:#118dff;display:flex;padding-left:39px}
.banner h1{width:1200px;text-align:center;font-weight:700;font-size:25.500px;line-height:48px;color:#fff}
.thumb{width:8px;height:37px;background:#c8c8c8;margin:5px 0 0 35px}
.row{display:flex}
.upper{height:307px;padding-top:20px}
.cards{display:grid;grid-template-columns:215px 227px;grid-template-rows:144px 140px;width:454px;align-items:start}
.vis{outline:1px solid #444;outline-offset:-1px}
.visbox{position:relative;margin-left:13px}
.lower .visbox{margin-left:0}
.hdr{position:absolute;left:325px;top:260px;width:101px;height:26px}
.handles{position:absolute;left:-2px;top:-2px;width:378px;height:358px}
.mapvis{width:483px;height:353px;border:1px solid #555;border-right:2px solid #222;border-top:2px solid #777;padding:0 0 0 5px}
.maptitle{width:470px;height:24px}
.map{width:470px;height:321px}
.mt,.sea,.bing{font-family:"Open Sans"}.mt{font-weight:700}.sea{fill:#4665c0}
.bing{font-size:26px;fill:#666}
.copy{font:26px "Liberation Sans";fill:#222}.terms{fill:#1b3fb0;text-decoration:underline}
.din{font:16px Roboto;fill:#252423;letter-spacing:.5px}.d14{font-size:14px;letter-spacing:0}
.num{font:54px Roboto;fill:#252423;letter-spacing:2px;stroke:#252423;stroke-width:1.100px}
.lab{font-family:"Open Sans";fill:#605e5c;font-size:13px}.lab.l16{font-size:15px}.l14{font-size:13.500px}.l13{font-size:12px}.bold{font-weight:700}
.date{font:12px "Open Sans";fill:#333}
.grid{fill:none;stroke:#c8c6c4;stroke-dasharray:1.500 4}
.lead{fill:none;stroke:#aaa;stroke-width:1.200}
.xl{font:700 14px "Open Sans";fill:#fff}
.filters{width:42px;border-left:1px solid #b3b0ad;border-right:1px solid #e1dfdd}
.filters svg{width:40px;height:75px}
.vtext{display:block;writing-mode:vertical-rl;font-weight:600;white-space:nowrap;font-size:17px;line-height:20px}
.vf{margin:2px 0 0 9px;letter-spacing:.5px}.vv{margin:6px 0 0 8px;letter-spacing:.75px}
.viz{width:43px;border-right:1px solid #e1dfdd;border-left:1px solid #e1dfdd}.viz svg{width:41px;height:45px}
.pages{height:44px;display:flex}
.pages>svg{width:159px;height:44px}
.pagetab{width:94px;background:#fff;border-left:1px solid #aaa;border-bottom:5px solid #117865;text-align:center;line-height:46px;font-size:14.500px;letter-spacing:-.2px}
.add{width:50px;background:#117865;padding:14px 0 0 18px}.add svg{width:14px;height:14px}
.data{width:355px}
.dhead{height:57px;display:flex;justify-content:space-between;padding:0 4px 0 10px}
.dhead h3{font-size:17px;font-weight:600;line-height:50px;letter-spacing:.4px}
.dhead svg{width:17px;height:16px;margin-top:17px}
.dsearch{margin-left:5px;width:350px;height:30px;background:#fff;border:1px solid #c8c6c4;border-bottom:1px solid #605e5c;border-radius:4px;display:flex;padding-left:14px;color:#666;font-size:15.500px;line-height:32px}
.dsearch svg{width:20px;height:20px;margin:5px 7px 0 0}
.fields{margin-top:10px;height:690px;overflow:hidden;display:flex;justify-content:space-between}
.fields ul{margin-top:-8.500px}
.fields li{height:30px;display:flex;align-items:center;padding-left:34px;font-size:14.500px;letter-spacing:-.1px;white-space:nowrap}
.fields li.l2{padding-left:53px}.fields li.l3{padding-left:72px}
.x{width:16px;height:14px;margin-right:5px;flex:none}
.cb{width:15px;height:15px;border:1px solid #777;border-radius:2px;margin-right:10px;flex:none}
.cb.on{background:#117865}
.fi{width:18px;height:18px;margin-right:4px;flex:none}
.scroll{width:10px;height:574px;background:#c8c6c4;margin-top:109px}
.status{height:29px;flex:none;border-top:1px solid #e1dfdd;display:flex;color:#3b3a39;font-size:14.500px;line-height:32px}
.pcount{width:1642px;margin-left:-2px}
.status>svg{width:170px;height:28px}
.pct{width:60px;padding-left:8px;line-height:29px;font-size:14.500px;letter-spacing:-.5px;color:#605e5c}
.status .fit{width:22px;height:18px;margin-top:6px}
```
